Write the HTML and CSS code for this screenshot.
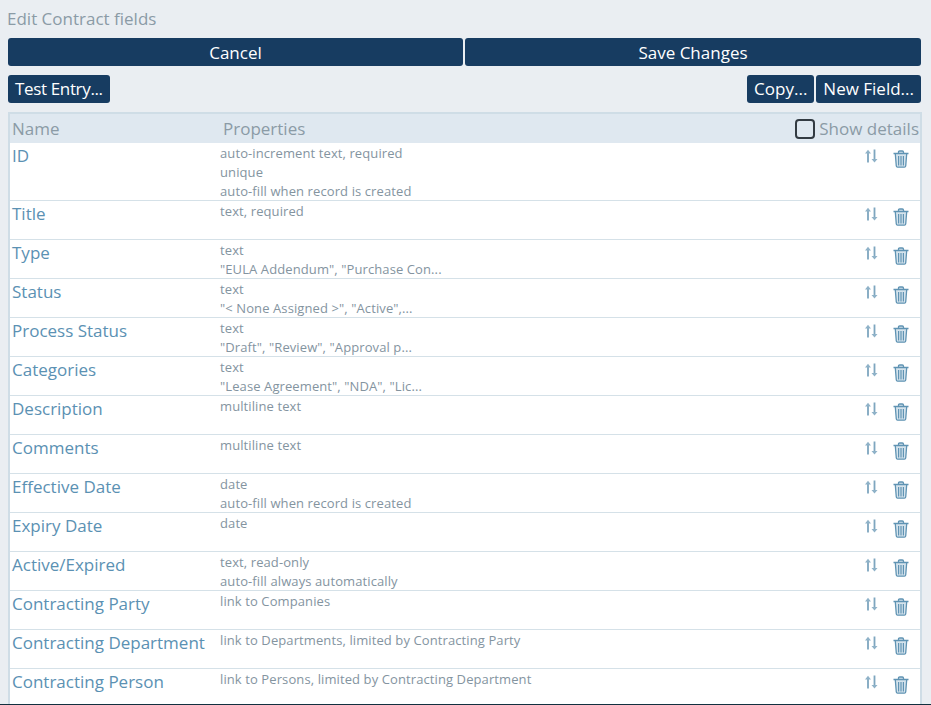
FILE: index.html
```html
<!DOCTYPE html>
<html lang="en">
<head>
<meta charset="utf-8">
<title>Edit Contract fields</title>
<link rel="stylesheet" href="styles.css">
</head>
<body>
<svg class="defs" width="0" height="0" aria-hidden="true">
  <symbol id="sort" viewBox="0 0 14 14">
    <path d="M4 13.500V3M10.500 .5V11" fill="none" stroke="#7ea6bf" stroke-width="1.800"/>
    <path d="M1 4.500 4 .8l3 3.700zM7.500 10 10.500 13.500l3-3.500z" fill="#8fb2c8"/>
  </symbol>
  <symbol id="trash" viewBox="0 0 16 18">
    <path d="M.5 3.500h15M5.500 3.300V2.200q0-1.200 1.200-1.200h2.600q1.200 0 1.200 1.200v1.100M2.300 3.700l1 12.300q.1 1.200 1.300 1.200h6.800q1.200 0 1.300-1.200l1-12.300" fill="#d5e3ec" stroke="#5f93b3" stroke-width="1.300"/>
    <path d="M5.600 6v9.500M8 6v9.500M10.400 6v9.500" fill="none" stroke="#5f93b3" stroke-width="1.200"/>
  </symbol>
</svg>
<main class="page">
  <h1 class="title">Edit Contract fields</h1>
  <div class="actions">
    <button class="btn">Cancel</button>
    <button class="btn">Save Changes</button>
  </div>
  <div class="tools">
    <button class="btn small tight">Test Entry...</button>
    <span class="spacer"></span>
    <button class="btn small">Copy...</button>
    <button class="btn small">New Field...</button>
  </div>
  <section class="table">
    <div class="head">
      <span class="h-name">Name</span>
      <span class="h-props">Properties</span>
      <span class="check"></span>
      <span class="h-show">Show details</span>
    </div>
    <div class="row tall">
      <div class="name">ID</div>
      <div class="props">auto-increment text, required<br>unique<br>auto-fill when record is created</div>
      <div class="icons"><svg class="i-sort"><use href="#sort"/></svg><svg class="i-trash"><use href="#trash"/></svg></div>
    </div>
    <div class="row">
      <div class="name">Title</div>
      <div class="props">text, required</div>
      <div class="icons"><svg class="i-sort"><use href="#sort"/></svg><svg class="i-trash"><use href="#trash"/></svg></div>
    </div>
    <div class="row">
      <div class="name">Type</div>
      <div class="props">text<br>"EULA Addendum", "Purchase Con...</div>
      <div class="icons"><svg class="i-sort"><use href="#sort"/></svg><svg class="i-trash"><use href="#trash"/></svg></div>
    </div>
    <div class="row">
      <div class="name">Status</div>
      <div class="props">text<br>"&lt; None Assigned &gt;", "Active",...</div>
      <div class="icons"><svg class="i-sort"><use href="#sort"/></svg><svg class="i-trash"><use href="#trash"/></svg></div>
    </div>
    <div class="row">
      <div class="name">Process Status</div>
      <div class="props">text<br>"Draft", "Review", "Approval p...</div>
      <div class="icons"><svg class="i-sort"><use href="#sort"/></svg><svg class="i-trash"><use href="#trash"/></svg></div>
    </div>
    <div class="row">
      <div class="name">Categories</div>
      <div class="props">text<br>"Lease Agreement", "NDA", "Lic...</div>
      <div class="icons"><svg class="i-sort"><use href="#sort"/></svg><svg class="i-trash"><use href="#trash"/></svg></div>
    </div>
    <div class="row">
      <div class="name">Description</div>
      <div class="props">multiline text</div>
      <div class="icons"><svg class="i-sort"><use href="#sort"/></svg><svg class="i-trash"><use href="#trash"/></svg></div>
    </div>
    <div class="row">
      <div class="name">Comments</div>
      <div class="props">multiline text</div>
      <div class="icons"><svg class="i-sort"><use href="#sort"/></svg><svg class="i-trash"><use href="#trash"/></svg></div>
    </div>
    <div class="row">
      <div class="name">Effective Date</div>
      <div class="props">date<br>auto-fill when record is created</div>
      <div class="icons"><svg class="i-sort"><use href="#sort"/></svg><svg class="i-trash"><use href="#trash"/></svg></div>
    </div>
    <div class="row">
      <div class="name">Expiry Date</div>
      <div class="props">date</div>
      <div class="icons"><svg class="i-sort"><use href="#sort"/></svg><svg class="i-trash"><use href="#trash"/></svg></div>
    </div>
    <div class="row">
      <div class="name">Active/Expired</div>
      <div class="props">text, read-only<br>auto-fill always automatically</div>
      <div class="icons"><svg class="i-sort"><use href="#sort"/></svg><svg class="i-trash"><use href="#trash"/></svg></div>
    </div>
    <div class="row">
      <div class="name">Contracting Party</div>
      <div class="props">link to Companies</div>
      <div class="icons"><svg class="i-sort"><use href="#sort"/></svg><svg class="i-trash"><use href="#trash"/></svg></div>
    </div>
    <div class="row">
      <div class="name">Contracting Department</div>
      <div class="props">link to Departments, limited by Contracting Party</div>
      <div class="icons"><svg class="i-sort"><use href="#sort"/></svg><svg class="i-trash"><use href="#trash"/></svg></div>
    </div>
    <div class="row">
      <div class="name">Contracting Person</div>
      <div class="props">link to Persons, limited by Contracting Department</div>
      <div class="icons"><svg class="i-sort"><use href="#sort"/></svg><svg class="i-trash"><use href="#trash"/></svg></div>
    </div>
  </section>
</main>
</body>
</html>
```
FILE: styles.css
```css
* { box-sizing: border-box; }
html, body { margin: 0; height: 705px; overflow: hidden; }
body {
  background: #eaeef2;
  font-family: "Open Sans", "Noto Sans", sans-serif;
  border-bottom: 1px solid #12303f;
}
.defs { display: block; height: 0; }
.page { padding: 9px 10px 0 7px; }
.title {
  margin: 0;
  height: 20px;
  font-size: 17px;
  line-height: 20px;
  font-weight: 400;
  color: #8b9ba6;
}
.actions {
  display: grid;
  grid-template-columns: 455px 456px;
  gap: 2px;
  margin: 9px 0 0 1px;
  width: 913px;
}
.btn {
  border: 0;
  border-radius: 3px;
  background: #173c61;
  color: #fff;
  font: 400 17px/26px "Open Sans", "Noto Sans", sans-serif;
  height: 28px;
  padding: 2px 0 0;
}
.tools { display: flex; gap: 2px; margin: 9px 0 0 1px; width: 913px; }
.small { padding: 0 7px; line-height: 28px; }
.tight { letter-spacing: -.35px; }
.spacer { flex: 1; }
.table {
  margin: 9px 0 0 1px;
  width: 914px;
  height: 600px;
  border: 2px solid #cfdde6;
  border-bottom: 0;
  background: #fff;
}
.head {
  display: flex;
  align-items: center;
  height: 29px;
  background: #dfe8f0;
  color: #8b9ba6;
  font-size: 17px;
}
.h-name { width: 213px; padding-left: 2px; }
.h-props { flex: 1; }
.check {
  width: 20px;
  height: 20px;
  border: 2px solid #333b42;
  border-radius: 4px;
  margin-right: 4px;
}
.h-show { margin-right: 1px; }
.row {
  display: flex;
  height: 39px;
  border-bottom: 1px solid #d5e1e8;
}
.row.tall { height: 58px; }
.name {
  width: 210px;
  padding: 1px 0 0 2px;
  font-size: 17px;
  line-height: 24px;
  color: #5b91b3;
  white-space: nowrap;
}
.props {
  flex: 1;
  padding-top: 1px;
  font-size: 13px;
  line-height: 19px;
  color: #84949f;
  letter-spacing: .1px;
  white-space: nowrap;
}
.icons {
  display: flex;
  align-items: flex-start;
  width: 56px;
  padding-top: 6px;
}
.i-sort { width: 14px; height: 14px; margin-right: 15px; }
.i-trash { width: 16px; height: 18px; margin-top: 1px; }
```
